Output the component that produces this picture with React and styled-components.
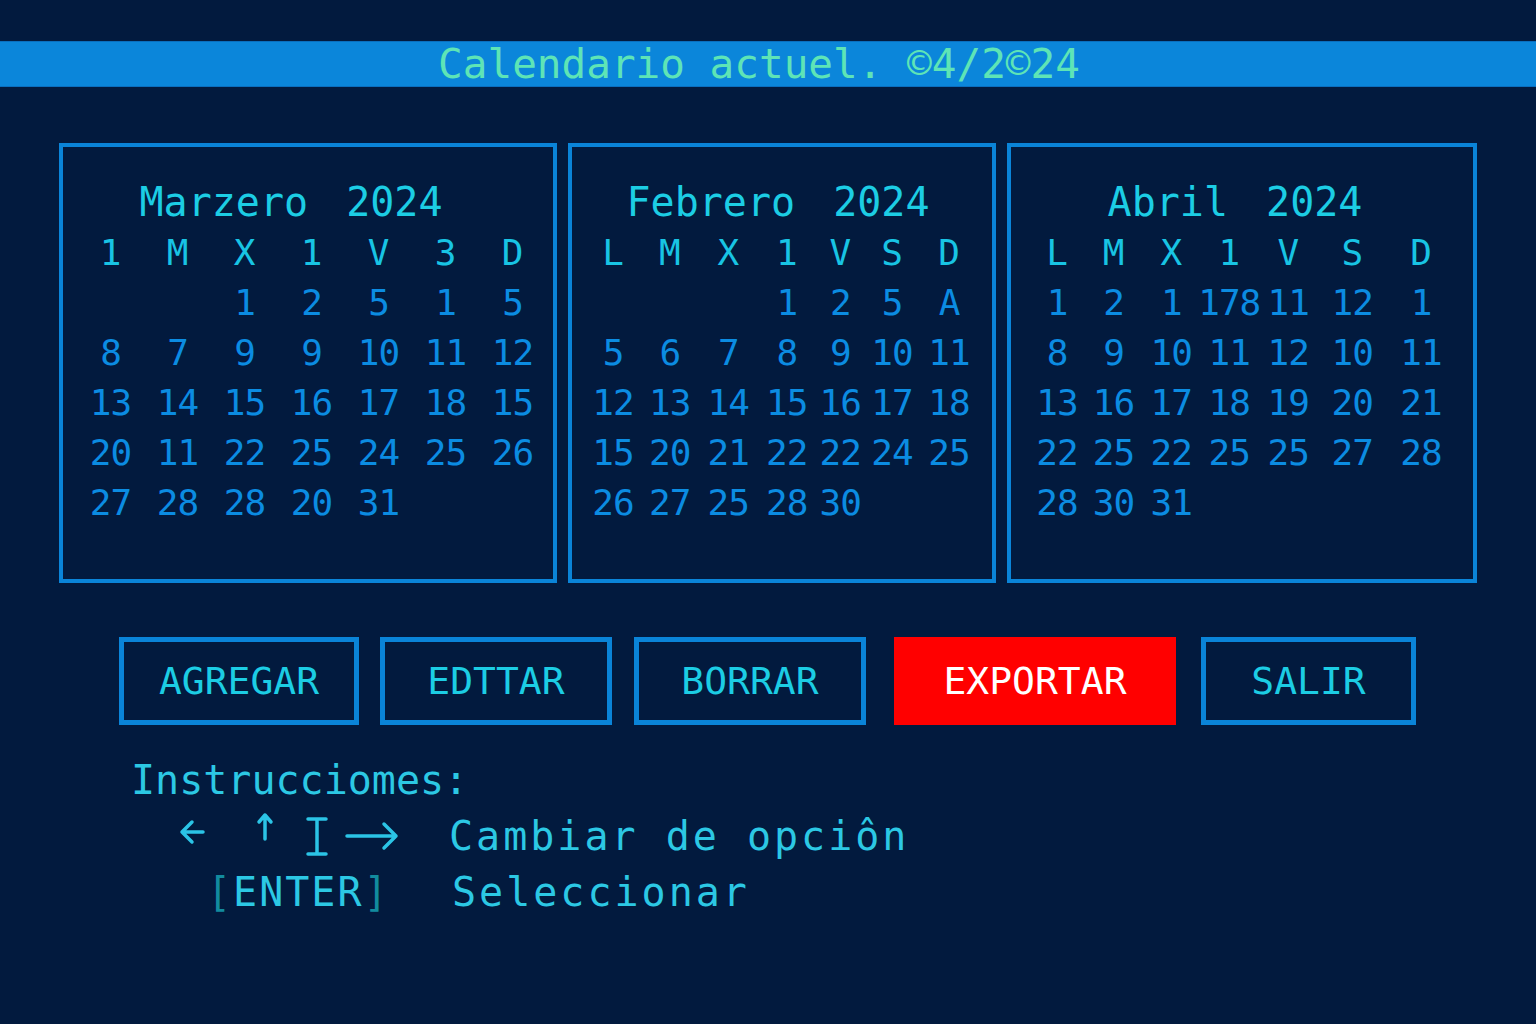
import styled, { createGlobalStyle } from "styled-components";

const GlobalStyle = createGlobalStyle`
  html, body {
    margin: 0;
    padding: 0;
    background: #021a3e;
  }
  body {
    font-family: "DejaVu Sans Mono", "Liberation Mono", monospace;
  }
`;

const Page = styled.div`
  width: 1536px;
  height: 1024px;
  background: #021a3e;
  padding-top: 41px;
  box-sizing: border-box;
  overflow: hidden;
`;

const TitleBar = styled.div`
  height: 46px;
  background: #0b86da;
  border-top: 1px solid #0a6fbf;
  border-bottom: 1px solid #0a6fbf;
  box-sizing: border-box;
  display: flex;
  align-items: center;
  justify-content: center;
  color: #5ee4b6;
  font-size: 41px;
  line-height: 1;
  padding-right: 18px;
`;

const Calendars = styled.div`
  display: flex;
  gap: 11px;
  padding-left: 59px;
  margin-top: 56px;
`;

const Box = styled.div`
  width: ${(p) => p.$width}px;
  height: 440px;
  border: 4px solid #0a84d8;
  box-sizing: border-box;
  padding-top: 30px;
`;

const MonthTitle = styled.div`
  height: 50px;
  line-height: 50px;
  font-size: 40px;
  color: #1ccde4;
  text-align: center;
  word-spacing: 14px;
  padding-right: ${(p) => p.$shift}px;
`;

const Grid = styled.div`
  display: grid;
  grid-template-columns: ${(p) => p.$cols};
  grid-auto-rows: 50px;
  padding-left: ${(p) => p.$pad}px;
`;

const Head = styled.div`
  font-size: 36px;
  color: #18c4e4;
  display: flex;
  align-items: center;
  justify-content: center;
`;

const Day = styled.div`
  font-size: 36px;
  color: #0b8ce2;
  display: flex;
  align-items: center;
  justify-content: center;
  letter-spacing: -1px;
`;

const Buttons = styled.div`
  display: flex;
  padding-left: 119px;
  margin-top: 54px;
`;

const Button = styled.button`
  width: ${(p) => p.$width}px;
  height: 88px;
  margin-left: ${(p) => p.$gap}px;
  box-sizing: border-box;
  border: 5px solid ${(p) => (p.$danger ? "#ff0000" : "#0a84d8")};
  background: ${(p) => (p.$danger ? "#ff0000" : "transparent")};
  color: ${(p) => (p.$danger ? "#ffffff" : "#1ccde4")};
  font-family: "DejaVu Sans Mono", "Liberation Mono", monospace;
  font-size: 38px;
  padding: 0;
  cursor: pointer;
`;

const Instructions = styled.div`
  padding-left: 131px;
  margin-top: 27px;
  color: #2cc8e4;
`;

const Line = styled.div`
  height: 56px;
  display: flex;
  align-items: center;
  font-size: 40px;
`;

const Key = styled.div`
  width: ${(p) => 318 - p.$indent}px;
  padding-left: ${(p) => p.$indent}px;
  display: flex;
  align-items: center;
  letter-spacing: ${(p) => p.$spacing || 0}px;
`;

const Bracket = styled.span`
  color: #128b9e;
`;

const Action = styled.span`
  letter-spacing: 3px;
  padding-left: ${(p) => p.$nudge || 0}px;
`;

const months = [
  {
    title: "Marzero 2024",
    width: 498,
    cols: "repeat(7, 67px)",
    pad: 14,
    shift: 34,
    heads: ["1", "M", "X", "1", "V", "3", "D"],
    rows: [
      ["", "", "1", "2", "5", "1", "5"],
      ["8", "7", "9", "9", "10", "11", "12"],
      ["13", "14", "15", "16", "17", "18", "15"],
      ["20", "11", "22", "25", "24", "25", "26"],
      ["27", "28", "28", "20", "31", "", ""],
    ],
  },
  {
    title: "Febrero 2024",
    width: 428,
    cols: "56px 57.5px 59.5px 57.5px 49.5px 54px 60px",
    pad: 13,
    shift: 8,
    heads: ["L", "M", "X", "1", "V", "S", "D"],
    rows: [
      ["", "", "", "1", "2", "5", "A"],
      ["5", "6", "7", "8", "9", "10", "11"],
      ["12", "13", "14", "15", "16", "17", "18"],
      ["15", "20", "21", "22", "22", "24", "25"],
      ["26", "27", "25", "28", "30", "", ""],
    ],
  },
  {
    title: "Abril 2024",
    width: 470,
    cols: "56px 57px 58.5px 57.5px 60.5px 67.5px 70px",
    pad: 18,
    shift: 14,
    heads: ["L", "M", "X", "1", "V", "S", "D"],
    rows: [
      ["1", "2", "1", "178", "11", "12", "1"],
      ["8", "9", "10", "11", "12", "10", "11"],
      ["13", "16", "17", "18", "19", "20", "21"],
      ["22", "25", "22", "25", "25", "27", "28"],
      ["28", "30", "31", "", "", "", ""],
    ],
  },
];

const buttons = [
  { label: "AGREGAR", width: 240, gap: 0 },
  { label: "EDTTAR", width: 232, gap: 21 },
  { label: "BORRAR", width: 232, gap: 22 },
  { label: "EXPORTAR", width: 282, gap: 28, danger: true },
  { label: "SALIR", width: 215, gap: 25 },
];

const ArrowKeys = () => (
  <svg width="225" height="50" viewBox="0 0 225 50" fill="none" stroke="#2bc4e6" strokeWidth="3.5" strokeLinecap="round" strokeLinejoin="round">
    <path d="M17 11 L7 21 L17 31 M7 21 L28 21" />
    <path d="M84 11 L90 4 L96 11 M90 4 L90 28" />
    <path d="M133 8 L151 8 M142 8 L142 43 M133 43 L151 43" />
    <path d="M172 25 L221 25 M209 13 L221 25 L209 37" />
  </svg>
);

const App = () => {
  return (
    <Page>
      <GlobalStyle />
      <TitleBar>Calendario actuel. ©4/2©24</TitleBar>
      <Calendars>
        {months.map((m) => (
          <Box key={m.title} $width={m.width}>
            <MonthTitle $shift={m.shift}>{m.title}</MonthTitle>
            <Grid $cols={m.cols} $pad={m.pad}>
              {m.heads.map((h, i) => (
                <Head key={"h" + i}>{h}</Head>
              ))}
              {m.rows.flat().map((d, i) => (
                <Day key={"d" + i}>{d}</Day>
              ))}
            </Grid>
          </Box>
        ))}
      </Calendars>
      <Buttons>
        {buttons.map((b) => (
          <Button key={b.label} $width={b.width} $gap={b.gap} $danger={b.danger}>
            {b.label}
          </Button>
        ))}
      </Buttons>
      <Instructions>
        <Line>Instrucciomes:</Line>
        <Line>
          <Key $indent={44}>
            <ArrowKeys />
          </Key>
          <Action>Cambiar de opciôn</Action>
        </Line>
        <Line>
          <Key $indent={76} $spacing={2}>
            <Bracket>[</Bracket>ENTER<Bracket>]</Bracket>
          </Key>
          <Action $nudge={3}>Seleccionar</Action>
        </Line>
      </Instructions>
    </Page>
  );
};

export default App;
